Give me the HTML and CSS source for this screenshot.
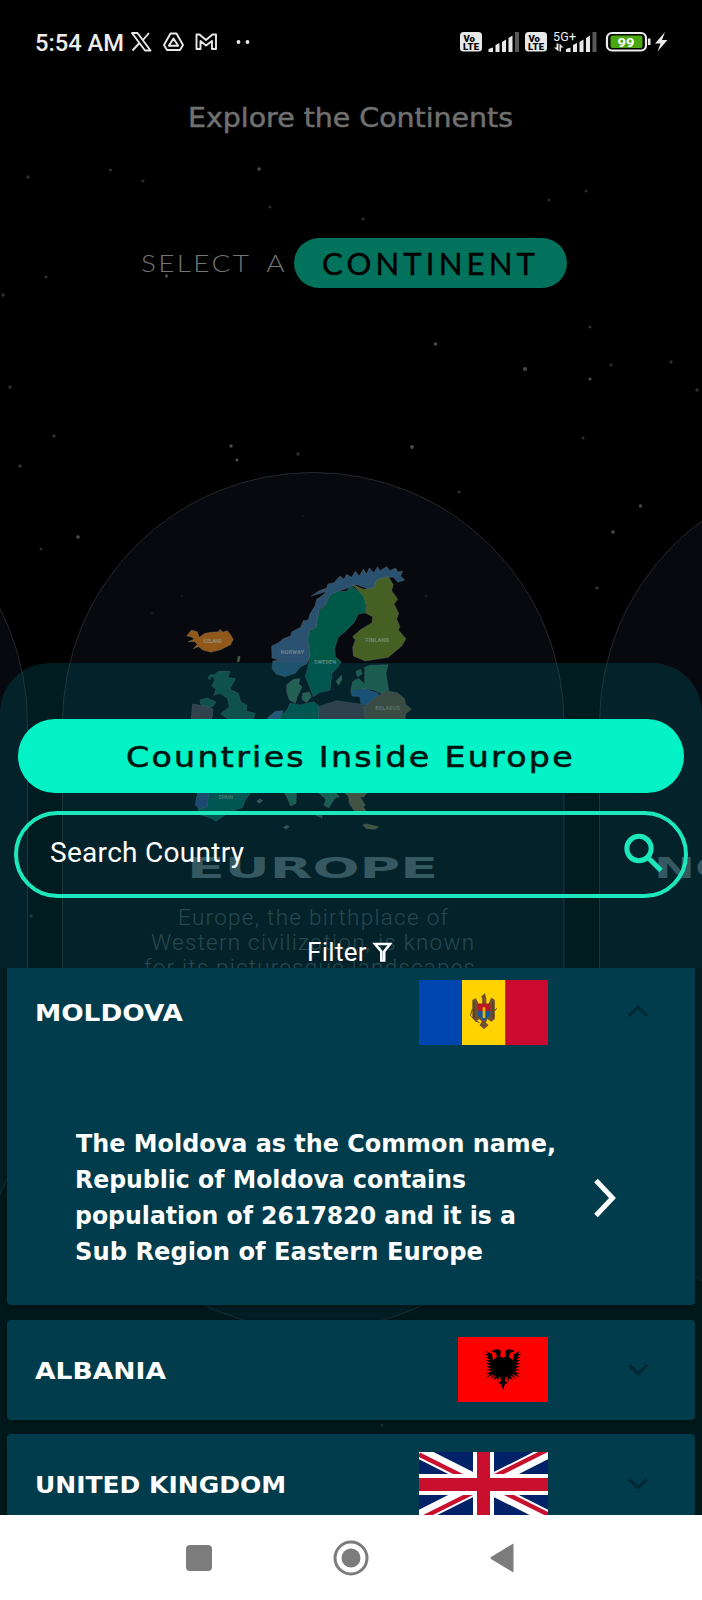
FILE: index.html
```
<!DOCTYPE html>
<html lang="en">
<head>
<meta charset="utf-8">
<title>Explore the Continents</title>
<link rel="stylesheet" href="styles.css">
</head>
<body>
<div class="screen">
  <svg class="backdrop" width="702" height="1515" viewBox="0 0 702 1515" aria-hidden="true">
    <g class="stars">
      <circle cx="259" cy="169" r="1.8"/><circle cx="525" cy="369" r="2"/><circle cx="435.5" cy="344" r="1.7"/><circle cx="590" cy="379" r="1.6"/><circle cx="231" cy="446" r="1.8"/><circle cx="237" cy="460" r="1.6"/><circle cx="412" cy="447" r="1.9"/><circle cx="640.5" cy="506" r="1.7"/><circle cx="613" cy="532" r="1.8"/><circle cx="78" cy="537" r="1.8"/><circle cx="166.5" cy="276" r="1.7"/>
    </g>
    <g class="stars faint">
      <circle cx="28" cy="177" r="1.8"/><circle cx="110.5" cy="170" r="1.6"/><circle cx="143" cy="181" r="1.6"/><circle cx="270" cy="207" r="1.5"/><circle cx="363" cy="219" r="1.6"/><circle cx="549" cy="200" r="1.5"/><circle cx="586" cy="191" r="1.5"/><circle cx="46" cy="277" r="1.6"/><circle cx="3" cy="295" r="1.8"/><circle cx="590" cy="327" r="1.6"/><circle cx="611" cy="365" r="1.4"/><circle cx="671" cy="362" r="1.7"/><circle cx="697" cy="390" r="1.8"/><circle cx="10" cy="387" r="1.8"/><circle cx="54" cy="436" r="1.7"/><circle cx="298" cy="454" r="1.7"/><circle cx="583" cy="438" r="1.6"/><circle cx="20" cy="466" r="1.8"/><circle cx="459" cy="492" r="1.6"/><circle cx="41" cy="549" r="1.5"/><circle cx="597" cy="588" r="1.7"/><circle cx="382" cy="1425" r="1.6"/><circle cx="31" cy="916" r="1.7"/>
    </g>
    <g class="orb">
      <rect x="-474" y="472.500" width="501.500" height="857.500" rx="250.500"/>
      <rect x="62.500" y="472.500" width="501.500" height="857.500" rx="250.500"/>
      <rect x="599.500" y="472.500" width="501.500" height="857.500" rx="250.500"/>
    </g>
    <g class="stars dim"><circle cx="426" cy="596" r="1.700"/><circle cx="152" cy="613" r="1.600"/><circle cx="303" cy="516" r="1.400"/><circle cx="182" cy="596" r="1.300"/></g>
    <g class="map" transform="translate(170 540) scale(.33333)">
      <path fill="#91581a" d="M50 288L64 270L82 275L88 292L104 280L122 277L145 275L150 268L158 276L172 272L181 283L190 298L182 314L164 323L150 330L122 337L98 330L86 320L70 326L82 313L74 305L54 305L73 297L62 290Z"/>
      <path fill="#2b5170" d="M305 318L325 308L340 296L362 288L365 276L392 262L400 242L415 240L420 222L436 196L440 178L458 166L470 154L424 168L446 153L470 144L474 132L492 128L510 108L522 118L530 103L545 112L556 94L568 108L580 88L590 102L598 84L612 98L622 80L630 92L650 80L660 92L676 84L684 96L698 94L692 108L704 120L684 127L670 112L650 112L628 120L614 144L594 146L560 134L540 142L504 154L480 166L466 196L448 210L440 262L418 272L414 300L422 345L410 372L392 380L376 400L345 410L318 402L306 385L308 364L326 360L306 354Z"/>
      <path fill="#005848" d="M418 272L438 264L446 215L466 196L480 166L504 154L528 154L545 138L568 156L580 160L588 182L588 218L565 222L552 248L528 272L505 292L494 325L496 350L514 366L498 388L486 400L480 450L447 458L430 470L418 438L406 410L414 380L420 345L414 300Z"/>
      <path fill="#465f22" d="M548 134L582 148L610 144L622 118L655 110L670 134L665 152L683 178L672 192L686 220L680 238L690 260L685 270L708 296L695 318L655 352L618 358L586 363L550 348L548 322L556 300L548 290L570 270L606 248L608 230L588 220L590 196L580 168Z"/>
      <path fill="#174f42" d="M146 394L180 394L174 412L196 416L180 448L205 460L212 485L230 495L230 514L256 520L242 560L210 600L165 600L180 540L152 522L178 500L172 475L150 460L132 466L138 448L126 438L134 420L128 408ZM114 412L124 402L130 406L118 420ZM90 480L112 474L138 486L128 500L108 504L92 492Z"/>
      <path fill="#4b3842" d="M68 492L106 498L128 506L128 530L110 560L60 570Z"/>
      <path fill="#34644c" d="M350 434L370 418L390 416L386 432L396 440L382 470L376 490L358 480L350 456ZM398 460L418 456L424 470L410 488L396 478ZM498 424L514 406L516 418L506 436Z"/>
      <path fill="#00564b" d="M360 490L390 495L432 485L448 500L446 600L310 600L330 530L352 508Z"/>
      <path fill="#34577f" d="M294 532L316 514L340 512L328 540L292 545Z"/>
      <path fill="#463743" d="M446 500L500 482L540 488L582 494L590 560L560 600L446 580Z"/>
      <path fill="#275f47" d="M584 382L600 376L654 374L648 400L656 450L640 462L610 450L572 446L542 452L548 425L565 415L584 432L584 405ZM558 394L572 388L576 402L562 410Z"/>
      <path fill="#265083" d="M542 454L580 446L626 460L612 490L590 496L572 490L570 470L546 468Z"/>
      <path fill="#544634" d="M582 500L618 470L650 452L682 458L704 476L706 492L724 508L706 522L706 570L590 570Z"/>
      <path fill="#005349" d="M120 740L250 740L238 765L226 780L218 802L172 820L138 844L122 834L90 824L80 790L90 740Z"/>
      <path fill="#2b4375" d="M86 740L118 744L112 800L88 808L76 794Z"/>
      <path fill="#24624b" d="M340 755L380 750L378 790L362 798L350 770ZM436 745L480 740L508 770L494 775L476 804L462 795L468 778L445 758ZM425 820L456 820L456 834Z"/>
      <path fill="#635234" d="M520 755L592 758L580 772L570 770L586 796L580 800L590 815L572 820L550 810L538 790L536 770ZM578 855L590 852L626 860L616 868L590 866Z"/>
      <path fill="#425c48" d="M260 784L270 776L278 782L268 790ZM340 862L350 856L358 860L348 868ZM204 350L210 348L208 364L202 366Z"/>
      <g class="maplabels">
        <text x="100" y="308" textLength="56">ICELAND</text><text x="332" y="343" textLength="70">NORWAY</text><text x="432" y="372" textLength="66">SWEDEN</text><text x="587" y="306" textLength="70">FINLAND</text><text x="616" y="510" textLength="74">BELARUS</text><text x="145" y="776" textLength="44">SPAIN</text>
      </g>
    </g>
    <g class="orbname">
      <text x="187" y="878" textLength="251" lengthAdjust="spacingAndGlyphs">EUROPE</text>
      <text x="654" y="878" textLength="460" lengthAdjust="spacingAndGlyphs">NORTH AMERICA</text>
    </g>
    <g class="orbtext">
      <text x="178" y="925" textLength="270">Europe, the birthplace of</text>
      <text x="151" y="950" textLength="323">Western civilization, is known</text>
      <text x="144" y="975" textLength="331">for its picturesque landscapes</text>
    </g>
  </svg>

  <header class="status">
    <svg width="260" height="84" viewBox="0 0 260 84">
      <text class="clock" x="35" y="51" textLength="89" lengthAdjust="spacingAndGlyphs">5:54 AM</text>
      <g class="line">
        <path d="M132 33H137.500L150.500 50.500H145ZM149 33L142.500 40.500M139 43.500L132.500 50.500"/>
        <path d="M170.500 33.500H176.500L183 45L180 50H167L164 45ZM173.500 38.500L168.800 45.800H178.200Z"/>
        <path d="M196.500 49V34.500H199.500L206 40L212.500 34.500H216V49H212V41L206 45.500L200.500 41V49Z"/>
      </g>
      <g class="solid"><circle cx="238.500" cy="42" r="1.900"/><circle cx="247.500" cy="42" r="1.900"/></g>
    </svg>
    <svg width="252" height="84" viewBox="450 0 252 84">
      <g class="solid">
        <rect x="460" y="32" width="22" height="19.500" rx="3.500"/><rect x="525" y="32" width="22" height="19.500" rx="3.500"/>
        <path d="M488.500 52V49L493 47.500V52ZM495.500 52V45L499.500 43V52ZM502 52V42L506 39.500V52ZM508.500 52V38L512.500 35.500V52ZM566 52V49L570.500 47.500V52ZM573 52V45L577 43V52ZM579.500 52V42L583.500 39.500V52ZM586 52V38L590 35.500V52Z"/>
        <path d="M648 38.500H650.500V45H648ZM665 32L655 43.500H660.500L657.500 51.500L667.500 40H662Z"/>
        <path d="M554 47.500H556.500V43.500H558.500V51.500ZM563.500 47.500H561V51.500H559.500V43.500Z"/>
      </g>
      <g class="spent"><rect x="515" y="32" width="4" height="20"/><rect x="592.500" y="32" width="4" height="20"/></g>
      <g class="volte"><text x="463.500" y="41.500">Vo</text><text x="463" y="50" textLength="16">LTE</text><text x="528.500" y="41.500">Vo</text><text x="528" y="50" textLength="16">LTE</text></g>
      <text class="net" x="553" y="40.500" textLength="23">5G+</text>
      <rect class="shell" x="607" y="33" width="39" height="17.500" rx="5"/>
      <rect class="charge" x="610.500" y="35.500" width="32" height="12.500" rx="2"/>
      <text class="percent" x="617.500" y="46.800" textLength="17" lengthAdjust="spacingAndGlyphs">99</text>
    </svg>
  </header>

  <main class="app">
    <h1 class="title"><svg width="324" height="40"><text x="-1" y="27" textLength="325" lengthAdjust="spacingAndGlyphs">Explore the Continents</text></svg></h1>
    <div class="pick">
      <svg class="pick-text" width="152" height="50"><text x="-1" y="33.500" textLength="146" lengthAdjust="spacingAndGlyphs">SELECT A</text></svg>
      <div class="pill"><svg width="222" height="50"><text x="0" y="36.500" textLength="217" lengthAdjust="spacingAndGlyphs">CONTINENT</text></svg></div>
    </div>

    <section class="sheet">
      <h2 class="banner"><svg width="452" height="73"><text x="-1" y="48" textLength="449" lengthAdjust="spacingAndGlyphs">Countries Inside Europe</text></svg></h2>
      <div class="search">
        <span class="hint">Search Country</span>
        <svg width="42" height="42" viewBox="0 0 42 42"><circle cx="17" cy="17.500" r="12.200"/><path d="M26.500 27L39 39.500"/></svg>
      </div>
      <div class="filter">
        <span>Filter</span>
        <svg width="20" height="20" viewBox="0 0 20 20"><path d="M3 2H18L12.200 9.500V18.500H9.300V9.500Z"/></svg>
      </div>
      <div class="list">
        <article class="card open">
          <div class="row">
            <svg class="name" width="260" height="30"><text x="-1" y="24" textLength="148" lengthAdjust="spacingAndGlyphs">MOLDOVA</text></svg>
            <svg class="flag" width="129" height="65" viewBox="0 0 129 65">
              <rect width="43" height="65" fill="#0046ae"/><rect x="43" width="43.500" height="65" fill="#ffd200"/><rect x="86.500" width="42.500" height="65" fill="#cc092f"/>
              <g transform="translate(6.500 3) scale(.9)">
                <path fill="#70502f" d="M62 15L66 11L67.500 17V23H70L73 16L77 19V40L73 43L69 40L67 44L70 47L65 51L60 47L62.500 43L60 40L56 43L52 39V19L56 17L59 23H63V18Z"/>
                <path fill="#bd1725" d="M58 23H72V31H58Z"/><path fill="#17569b" d="M58 31H72V36L65 42L58 36Z"/><path fill="#e5b500" d="M63.500 27H66.500V39H63.500Z"/>
                <path d="M54 21V39M75 21V39M52 29L50 36L55 41M77 31L79 28M60 44L55 42" fill="none" stroke="#473724"/>
              </g>
            </svg>
            <svg class="chev" width="22" height="14"><path d="M2 11L11 2L20 11"/></svg>
          </div>
          <div class="detail">
            <svg class="desc" width="490" height="150">
              <text x="0" y="25" textLength="480" lengthAdjust="spacingAndGlyphs">The Moldova as the Common name,</text>
              <text x="-1" y="61" textLength="391" lengthAdjust="spacingAndGlyphs">Republic of Moldova contains</text>
              <text x="-1" y="97" textLength="441" lengthAdjust="spacingAndGlyphs">population of 2617820 and it is a</text>
              <text x="-1" y="133" textLength="408" lengthAdjust="spacingAndGlyphs">Sub Region of Eastern Europe</text>
            </svg>
            <svg class="go" width="26" height="40"><path d="M3 2.500L19.500 20L3 37.500"/></svg>
          </div>
        </article>
        <article class="card">
          <div class="row">
            <svg class="name" width="260" height="30"><text x="-1" y="24" textLength="131" lengthAdjust="spacingAndGlyphs">ALBANIA</text></svg>
            <svg class="flag" width="90" height="65" viewBox="0 0 90 65">
              <rect width="90" height="65" fill="#f00"/>
              <path d="M45 21L42 19L43 14L39 12L33 14L38 16L39 20L35 23L34 17L28 14L30 17L27 17L31 20L28 20L32 23L28 23L32 26L28 26L33 29L28 29L33 32L28 33L34 34L28 37L32 37L28 41L36 37L32 42L38 38L35 43L39 41L39 45L42 39L43 44L40 46L43 47L45 53L47 47L50 46L47 44L48 39L51 45L51 41L55 43L52 38L58 42L54 37L62 41L58 37L62 37L56 34L62 33L57 32L62 29L57 29L62 26L58 26L62 23L58 23L62 20L59 20L63 17L60 17L62 14L56 17L55 23L51 20L52 16L57 14L51 12L47 14L48 19Z"/>
            </svg>
            <svg class="chev" width="22" height="14"><path d="M2 2L11 11L20 2"/></svg>
          </div>
        </article>
        <article class="card">
          <div class="row">
            <svg class="name" width="260" height="30"><text x="-1" y="24" textLength="251" lengthAdjust="spacingAndGlyphs">UNITED KINGDOM</text></svg>
            <svg class="flag" width="129" height="65" viewBox="0 0 129 65">
              <rect width="129" height="65" fill="#012169"/>
              <path d="M0 0L129 65M129 0L0 65" stroke="#fff" stroke-width="13"/>
              <path d="M0 2.500L64 34.500M129 62.500L65 30.500M129 -2.500L65 29.500M0 67.500L64 35.500" stroke="#c8102e" stroke-width="4.300"/>
              <path d="M64.500 0V65M0 32.500H129" stroke="#fff" stroke-width="21"/>
              <path d="M64.500 0V65M0 32.500H129" stroke="#c8102e" stroke-width="13"/>
            </svg>
            <svg class="chev" width="22" height="14"><path d="M2 2L11 11L20 2"/></svg>
          </div>
        </article>
      </div>
    </section>
  </main>

  <nav class="softkeys">
    <svg width="26" height="26"><rect width="26" height="26" rx="4"/></svg>
    <svg width="36" height="36"><circle class="ring" cx="18" cy="18" r="16"/><circle cx="18" cy="18" r="9.500"/></svg>
    <svg width="25" height="30"><path d="M23.500 .5V29.500L1 16Q0 15 1 14Z"/></svg>
  </nav>
</div>
</body>
</html>
```
FILE: styles.css
```
* { box-sizing: border-box; }
body { margin: 0; background: #000; font-family: Roboto, sans-serif; }
svg { display: block; flex: none; overflow: visible; }
h1, h2 { margin: 0; font-weight: 400; }

.screen {
  position: relative;
  width: 702px;
  height: 1600px;
  display: flex;
  flex-direction: column;
  overflow: hidden;
  background: #000;
}

/* Dimmed star field and continent cards behind the sheet */
.backdrop { position: absolute; top: 0; left: 0; overflow: hidden; }
.stars { fill: #4a4a4a; }
.faint { fill: #2e2e2e; }
.dim { fill: #16171d; }
.orb rect { fill: #07090f; stroke: #25282b; stroke-width: 1; }
.map path { stroke: #657477; stroke-opacity: .6; stroke-width: 1.8; }
.maplabels text { font: 700 16px Roboto, sans-serif; fill: #9aa; opacity: .6; }
.orbname text { font: 700 28.500px "DejaVu Sans", sans-serif; fill: #50595f; }
.orbtext text { font: 300 22.500px Roboto, sans-serif; fill: #3a4348; }

.status, .app { position: relative; }
.status { height: 84px; display: flex; justify-content: space-between; }
.clock { font: 500 24px Roboto, sans-serif; fill: #ececec; }
.line path { fill: none; stroke: #e8e8e8; stroke-width: 1.900; stroke-linejoin: round; }
.solid { fill: #e8e8e8; }
.spent { fill: #585858; }
.volte text { font: 900 9.500px Roboto, sans-serif; fill: #000; }
.net { font: 400 12.500px Roboto, sans-serif; fill: #eee; }
.shell { fill: none; stroke: #eee; stroke-width: 2.200; }
.charge { fill: #49a80f; }
.percent { font: 700 13.500px Roboto, sans-serif; fill: #fff; }

.app { height: 1431px; display: flex; flex-direction: column; }
.title { height: 54px; padding: 16px 0 0 189px; }
.title text { font: 400 26px "DejaVu Sans", sans-serif; fill: #707070; stroke: #707070; stroke-width: .5; }

.pick { height: 50px; margin-top: 100px; padding-left: 142px; display: flex; }
.pick-text text { font: 300 24px Lato, sans-serif; letter-spacing: 2px; word-spacing: 6px; fill: #747474; }
.pill { width: 273px; border-radius: 25px; background: #02725c; padding-left: 28px; }
.pill text { font: 400 30px Lato, sans-serif; letter-spacing: 4px; fill: #000; stroke: #000; stroke-width: .4; }

.sheet {
  margin-top: 375px;
  height: 852px;
  padding-top: 56px;
  overflow: hidden;
  border-radius: 50px 50px 0 0;
  background: rgba(0, 88, 98, .32);
}
.banner { margin: 0 18px 0 17.500px; height: 73.500px; border-radius: 37px; background: #03f3c6; padding-left: 109px; }
.banner text { font: 400 29px "DejaVu Sans", sans-serif; letter-spacing: 2px; fill: #001512; stroke: #001512; stroke-width: .6; }
.search {
  margin: 18px 14px 0;
  height: 87.500px;
  border: 4px solid #1ce8bc;
  border-radius: 44px;
  padding: 0 20px 4px 32px;
  display: flex;
  align-items: center;
  justify-content: space-between;
}
.search svg { fill: none; stroke: #1ce8bc; stroke-width: 5; }
.hint { font-size: 28px; letter-spacing: .3px; color: #fff; }
.filter {
  height: 70px;
  padding: 37px 0 0 307px;
  display: flex;
  gap: 5px;
  color: #fff;
  font-size: 26px;
  letter-spacing: .3px;
  line-height: 34px;
}
.filter svg { margin-top: 7px; fill: none; stroke: #fff; stroke-width: 2.600; }

.list { padding: 0 7px; display: flex; flex-direction: column; gap: 14.500px; background: rgba(0, 0, 0, .1); }
.card { height: 100px; flex: none; border-radius: 4px; background: #003c4b; box-shadow: 0 2px 6px rgba(0, 0, 0, .4); }
.card.open { height: 337px; border-radius: 0 0 4px 4px; clip-path: inset(0 -8px -8px -8px); }
.row { height: 100px; padding: 0 46px 0 29px; display: flex; align-items: center; }
.open .row { height: 88px; }
.name text { font: 700 23.500px "DejaVu Sans", sans-serif; fill: #fff; }
.flag { margin-left: auto; overflow: hidden; }
.chev { margin-left: 79px; fill: none; stroke: #002733; stroke-width: 3; }
.detail { padding: 71px 0 0 69px; display: flex; align-items: flex-start; }
.desc text { font: 700 25.500px "DejaVu Sans", sans-serif; fill: #fff; }
.go { margin: 51px 0 0 27px; fill: none; stroke: #fff; stroke-width: 5; }

.softkeys {
  position: relative;
  height: 85px;
  padding-left: 185.500px;
  display: flex;
  align-items: center;
  background: #fff;
  fill: #7c7c7c;
}
.softkeys svg + svg { margin-left: 121px; }
.softkeys svg:last-child { margin-left: 121.500px; }
.ring { fill: none; stroke: #7c7c7c; stroke-width: 3; }
```
